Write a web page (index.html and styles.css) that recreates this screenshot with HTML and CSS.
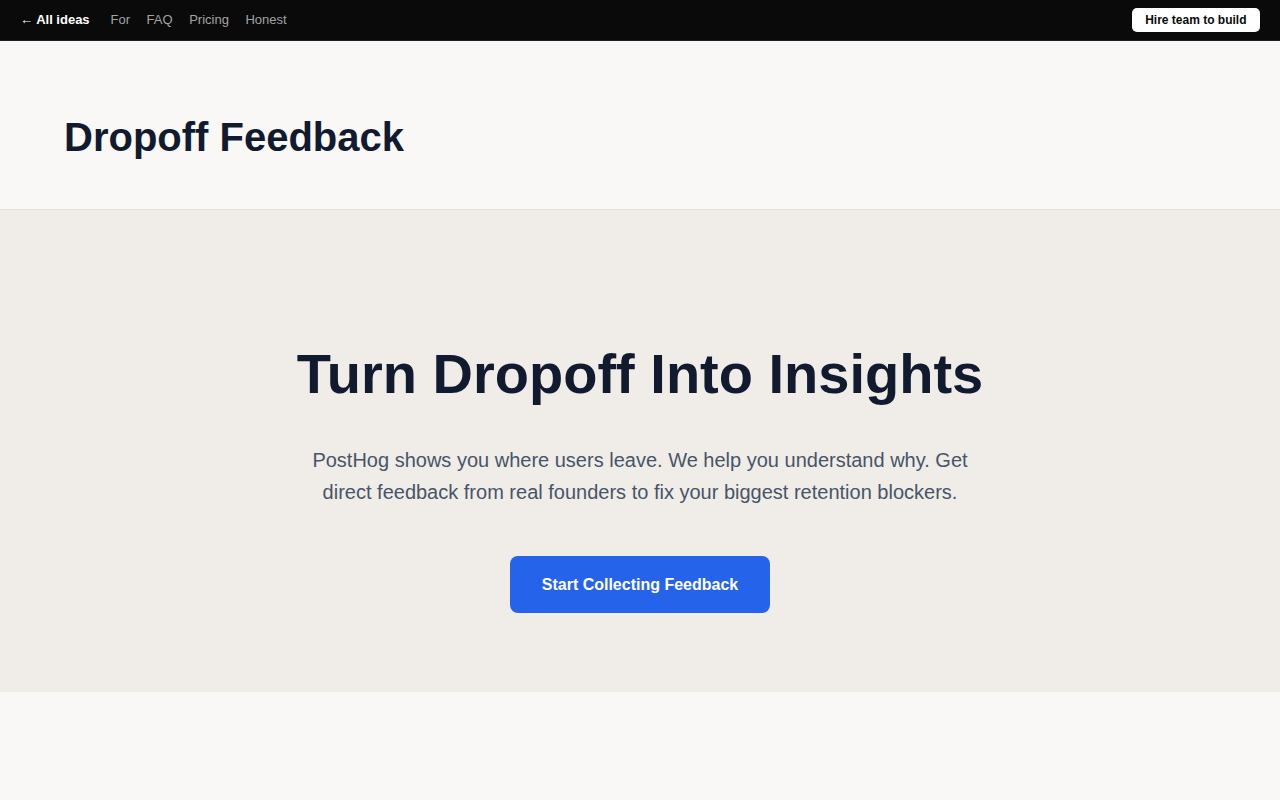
FILE: index.html
```html
<!DOCTYPE html>
<html lang="en">
<head>
<meta charset="utf-8">
<title>Dropoff Feedback</title>
<link rel="stylesheet" href="styles.css">
</head>
<body>
  <nav class="topbar">
    <div class="topbar-left">
      <a class="back-link" href="#">← All ideas</a>
      <div class="nav-links">
        <a href="#">For</a>
        <a href="#">FAQ</a>
        <a href="#">Pricing</a>
        <a href="#">Honest</a>
      </div>
    </div>
    <a class="hire-btn" href="#">Hire team to build</a>
  </nav>

  <header class="page-header">
    <h1 class="page-title">Dropoff Feedback</h1>
  </header>

  <section class="hero">
    <h2 class="hero-title">Turn Dropoff Into Insights</h2>
    <p class="hero-text">PostHog shows you where users leave. We help you understand why. Get direct feedback from real founders to fix your biggest retention blockers.</p>
    <a class="cta" href="#">Start Collecting Feedback</a>
  </section>

  <div class="page-rest"></div>
</body>
</html>
```

FILE: styles.css
```css
* {
  box-sizing: border-box;
}

html, body {
  margin: 0;
  padding: 0;
}

body {
  font-family: "Liberation Sans", Arial, sans-serif;
  background: #f9f8f6;
  color: #111827;
}

a {
  text-decoration: none;
}

/* top navigation */
.topbar {
  height: 41px;
  background: #0a0a0a;
  border-bottom: 1px solid #1f1f1f;
  display: flex;
  align-items: center;
  justify-content: space-between;
  padding: 0 20px 1px;
}

.topbar-left {
  display: flex;
  align-items: center;
  gap: 21px;
}

.back-link {
  color: #ffffff;
  font-weight: 700;
  font-size: 13px;
}

.nav-links {
  display: flex;
  gap: 16.5px;
}

.nav-links a {
  color: #a3a3a3;
  font-size: 13px;
}

.hire-btn {
  background: #ffffff;
  color: #0a0a0a;
  font-weight: 700;
  font-size: 12px;
  line-height: 14px;
  padding: 5px 13.5px;
  border-radius: 5px;
}

/* page header */
.page-header {
  padding: 72px 64px 48px;
  border-bottom: 1px solid #e2dfda;
}

.page-title {
  margin: 0;
  font-size: 40px;
  line-height: 48px;
  font-weight: 700;
  color: #111a2e;
}

/* hero */
.hero {
  background: #f0ece7;
  padding: 128px 24px 79px;
  display: flex;
  flex-direction: column;
  align-items: center;
  text-align: center;
}

.hero-title {
  margin: 0 0 34px;
  font-size: 56px;
  line-height: 72px;
  font-weight: 700;
  color: #111a2e;
}

.hero-text {
  margin: 0 0 48px;
  max-width: 672px;
  font-size: 20px;
  line-height: 32px;
  color: #475569;
}

.cta {
  background: #2563eb;
  color: #ffffff;
  font-weight: 700;
  font-size: 16px;
  line-height: 25px;
  padding: 16px 32px;
  border-radius: 8px;
}

.page-rest {
  height: 120px;
}
```
